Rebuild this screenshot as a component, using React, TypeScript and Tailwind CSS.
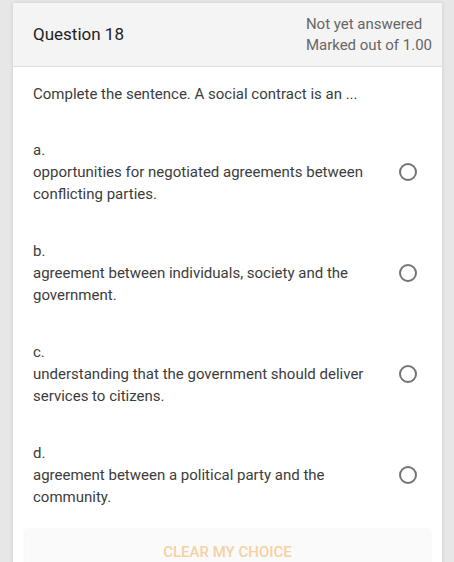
const options = [
  { label: "a.", text: "opportunities for negotiated agreements between conflicting parties." },
  { label: "b.", text: "agreement between individuals, society and the government." },
  { label: "c.", text: "understanding that the government should deliver services to citizens." },
  { label: "d.", text: "agreement between a political party and the community." },
];

const App = () => {
  return (
    <div className="min-h-[562px] bg-[#e7e7e7] pl-[13px] pr-[12px] pt-[3px] font-['Roboto',sans-serif]">
      <div className="bg-white shadow-[0_0_4px_rgba(0,0,0,0.12)]">
        <div className="flex h-[64px] items-center justify-between border-b border-[#dcdcdc] bg-[#f4f4f4] pl-[20px] pr-[10px]">
          <h3 className="text-[17px] text-[#222]">Question 18</h3>
          <div className="text-[15px] leading-[21px] text-[#666]">
            <div>Not yet answered</div>
            <div>Marked out of 1.00</div>
          </div>
        </div>
        <div className="px-[20px] pt-[16px]">
          <p className="text-[15px] leading-[22px] text-[#3c3c3c]">
            Complete the sentence. A social contract is an ...
          </p>
          <div className="mt-[34px] flex flex-col gap-[35px]">
            {options.map((o) => (
              <div key={o.label} className="text-[15px] leading-[22px] text-[#3c3c3c]">
                <div>{o.label}</div>
                <div className="flex items-start">
                  <span className="w-[352px]">{o.text}</span>
                  <span className="ml-auto mr-[5px] mt-[2px] h-[18px] w-[18px] rounded-full border-[2.5px] border-[#747474]" />
                </div>
              </div>
            ))}
          </div>
          <div className="mt-[22px] -mx-[8px] flex h-[44px] items-center justify-center bg-[#fafafa] shadow-[0_0_3px_rgba(0,0,0,0.08)]">
            <span className="text-[15px] font-medium uppercase text-[#f7d1a3]">Clear my choice</span>
          </div>
        </div>
      </div>
    </div>
  );
};

export default App;
